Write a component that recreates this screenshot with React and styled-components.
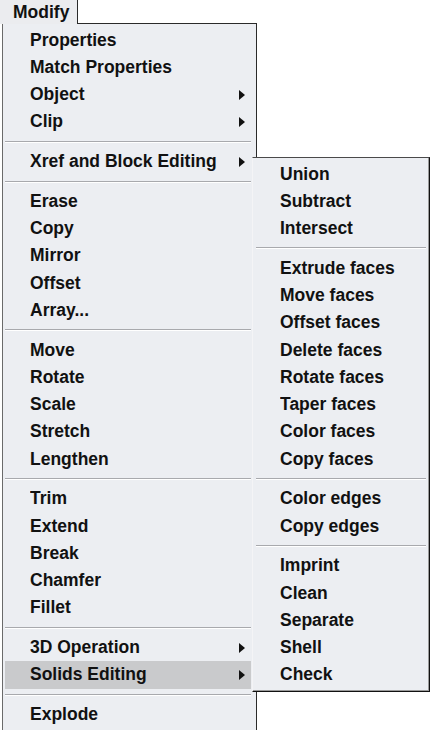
import styled, { createGlobalStyle } from 'styled-components'

const GlobalStyle = createGlobalStyle`
    html, body {
        margin: 0;
        padding: 0;
        background: #fff;
        overflow: hidden;
    }
    body {
        font-family: "Liberation Sans", Arial, sans-serif;
    }
`

const mainGroups = [
    [{label: 'Properties'}, {label: 'Match Properties'}, {label: 'Object', sub: true}, {label: 'Clip', sub: true}],
    [{label: 'Xref and Block Editing', sub: true}],
    [{label: 'Erase'}, {label: 'Copy'}, {label: 'Mirror'}, {label: 'Offset'}, {label: 'Array...'}],
    [{label: 'Move'}, {label: 'Rotate'}, {label: 'Scale'}, {label: 'Stretch'}, {label: 'Lengthen'}],
    [{label: 'Trim'}, {label: 'Extend'}, {label: 'Break'}, {label: 'Chamfer'}, {label: 'Fillet'}],
    [{label: '3D Operation', sub: true}, {label: 'Solids Editing', sub: true, active: true}],
    [{label: 'Explode'}],
]

const solidsGroups = [
    ['Union', 'Subtract', 'Intersect'],
    ['Extrude faces', 'Move faces', 'Offset faces', 'Delete faces', 'Rotate faces', 'Taper faces', 'Color faces', 'Copy faces'],
    ['Color edges', 'Copy edges'],
    ['Imprint', 'Clean', 'Separate', 'Shell', 'Check'],
]

const App = () => {
    return (
        <Screen>
            <GlobalStyle/>
            <Tab><Label>Modify</Label></Tab>
            <Menu>
                {mainGroups.map((group, gi) => (
                    <div key={gi}>
                        {gi > 0 && <Separator/>}
                        {group.map((item) => (
                            <Item key={item.label} active={item.active}>
                                <Label>{item.label}</Label>
                                {item.sub && <Arrow/>}
                            </Item>
                        ))}
                    </div>
                ))}
            </Menu>
            <SubMenu>
                {solidsGroups.map((group, gi) => (
                    <div key={gi}>
                        {gi > 0 && <SubSeparator/>}
                        {group.map((label) => (
                            <SubItem key={label}><Label>{label}</Label></SubItem>
                        ))}
                    </div>
                ))}
            </SubMenu>
        </Screen>
    )
}

const Screen = styled.div`
    position: relative;
    width: 432px;
    height: 730px;
    overflow: hidden;
    background: #fff;
    color: #111;
    font-family: "Liberation Sans", Arial, sans-serif;
    font-weight: bold;
    font-size: 17.5px;
`

// glyphs in the shot are a bit taller than Arial at this width
const Label = styled.span`
    display: inline-block;
    transform: scaleY(1.07);
    transform-origin: center;
`

const Tab = styled.div`
    position: relative;
    z-index: 2;
    width: 64px;
    height: 24px;
    margin-bottom: -1px;
    padding-left: 13px;
    display: flex;
    align-items: center;
    background: #ebecef;
    border-right: 1px solid #2a2a2a;
`

const Menu = styled.div`
    margin-left: 2px;
    width: 253px;
    height: 760px;
    padding-top: 2.5px;
    background: #eceef2;
    border: 1px solid #2a2a2a;
    border-left-color: #6a6a6a;
`

const Item = styled.div`
    height: 27.25px;
    margin: 0 5px 0 2px;
    padding: 0 6px 0 25px;
    display: flex;
    align-items: center;
    justify-content: space-between;
    background: ${(props) => (props.active ? '#c9cacc' : 'transparent')};
`

const Arrow = styled.div`
    width: 0;
    height: 0;
    border-top: 5px solid transparent;
    border-bottom: 5px solid transparent;
    border-left: 6px solid #111;
`

const Separator = styled.div`
    height: 12.5px;
    margin: 0 5px 0 2px;
    display: flex;
    flex-direction: column;
    justify-content: center;
    &::before{
        content: '';
        height: 1px;
        background: #a8a9ad;
    }
    &::after{
        content: '';
        height: 1px;
        background: #fff;
    }
`

const SubMenu = styled.div`
    position: absolute;
    z-index: 3;
    left: 252px;
    top: 157px;
    width: 176px;
    padding: 2.4px 0;
    background: #eceef2;
    border-top: 1px solid #4a4a4a;
    border-left: 1px solid #f4f4f6;
    border-right: 1px solid #111;
    border-bottom: 1px solid #111;
    box-shadow: inset -1px -1px 0 #9a9a9a;
`

const SubItem = styled.div`
    height: 27.25px;
    padding-left: 27px;
    display: flex;
    align-items: center;
`

const SubSeparator = styled(Separator)`
    margin: 0 3px 0 3px;
`

export default App
